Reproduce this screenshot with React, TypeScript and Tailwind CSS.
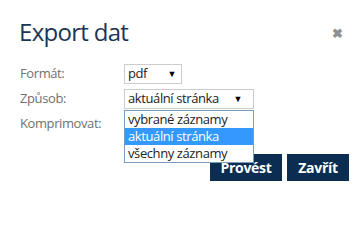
export default function App() {
  return (
    <div
      className="relative w-[361px] h-[202px] bg-white overflow-hidden"
      style={{ fontFamily: '"Open Sans", "Noto Sans", sans-serif' }}
    >
      {/* Header */}
      <div className="flex items-center justify-between pl-[19px] pr-[18px] pt-[14px] h-[50px]">
        <h2 className="text-[24px] leading-[32px] text-[#1b3556] font-normal tracking-[-0.7px]">Export dat</h2>
        <span className="text-[#8f8f8f] text-[13px] font-bold leading-none mt-[2px]">✖</span>
      </div>

      {/* Form */}
      <div className="pl-[20px] mt-[14px] flex flex-col gap-[5px] text-[13px] tracking-[-0.4px]">
        <div className="flex items-center h-[20px]">
          <label className="w-[104px] text-[#707070]">Formát:</label>
          <div className="w-[58px] h-[20px] border border-[#cccccc] flex items-center justify-between pl-[3px] pr-[5px] text-[#222]">
            <span>pdf</span>
            <span className="text-[9px] text-black">▼</span>
          </div>
        </div>
        <div className="relative flex items-center h-[20px]">
          <label className="w-[104px] text-[#707070]">Způsob:</label>
          <div className="w-[130px] h-[20px] border border-[#cccccc] flex items-center justify-between pl-[3px] pr-[11px] text-[#222]">
            <span>aktuální stránka</span>
            <span className="text-[9px] text-black">▼</span>
          </div>
          {/* Open dropdown list */}
          <ul className="absolute z-10 left-[104px] top-[21px] w-[130px] bg-white border border-[#7a9cc0] text-[#222] leading-[17px]">
            <li className="px-[3px] h-[17px]">vybrané záznamy</li>
            <li className="px-[3px] h-[17px] bg-[#3399ff] text-white">aktuální stránka</li>
            <li className="px-[3px] h-[17px]">všechny záznamy</li>
          </ul>
        </div>
        <div className="flex items-center h-[20px]">
          <label className="w-[104px] text-[#707070]">Komprimovat:</label>
          <input type="checkbox" className="w-[13px] h-[13px]" />
        </div>
      </div>

      {/* Footer buttons */}
      <div className="flex justify-end gap-[5px] pr-[12px] mt-[20px]">
        <button className="w-[72px] h-[27px] bg-[#0b2d52] text-white font-bold text-[14px] tracking-[-0.3px]">Provést</button>
        <button className="w-[62px] h-[27px] bg-[#0b2d52] text-white font-bold text-[14px] tracking-[-0.3px]">Zavřít</button>
      </div>
    </div>
  );
}
